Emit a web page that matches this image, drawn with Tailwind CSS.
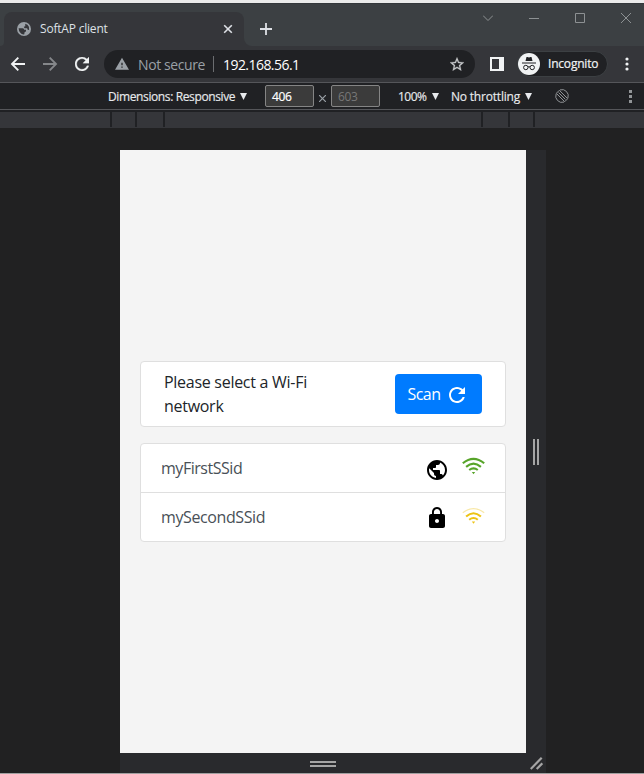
<!DOCTYPE html>
<html lang="en">
<head>
<meta charset="utf-8">
<title>SoftAP client</title>
<script src="https://cdn.jsdelivr.net/npm/@tailwindcss/browser@4"></script>
</head>
<body class="w-[644px] h-[774px] overflow-hidden bg-[#202124] font-['Segoe_UI','Open_Sans','Noto_Sans',sans-serif] whitespace-nowrap">
<div class="flex flex-col h-[774px]">
  <div class="h-[3px] bg-[#ebebeb] shrink-0"></div>
  <!-- tab strip -->
  <header class="h-[43px] shrink-0 bg-[#3c4043] border-t border-[#34383b] flex">
    <div class="w-1 flex flex-col justify-end bg-[#35363a]"><div class="h-full bg-[#3c4043] rounded-br-[4px]"></div></div>
    <div class="w-60 mt-2 bg-[#35363a] rounded-t-lg flex items-center pl-[13px] pr-[11px]">
      <svg class="size-[14px]" viewBox="0 0 14 14"><circle cx="7" cy="7" r="7" fill="#9aa0a6"/><path d="M1.600 6.200h4.200q1.400.2 1.400 1.500h1.800v1.800q-1.600.2-1.600 1.400v1.300l-1.200.2Q2 11.300 1.600 6.200zM8.200 1.700q2.700.7 3.700 3.100l.2 3.200-1.400-.2-.6-1.500H7.500l-.7-1.500 1.500-.5z" fill="#35363a"/></svg>
      <span class="ml-[9px] text-[12px] tracking-[-0.2px] text-[#dee1e6] flex-1">SoftAP client</span>
      <svg class="size-[10px]" viewBox="0 0 10 10" stroke="#dee1e6" stroke-width="1.600"><path d="M1.200 1.200l7.600 7.600M8.800 1.200L1.200 8.800"/></svg>
    </div>
    <div class="w-2 bg-[#35363a]"><div class="h-full bg-[#3c4043] rounded-bl-lg"></div></div>
    <svg class="ml-2 mt-[19px] size-3" viewBox="0 0 12 12" stroke="#dee1e6" stroke-width="1.800"><path d="M6 0v12M0 6h12"/></svg>
    <div class="flex ml-[211px] pt-[9px] gap-[36px]">
      <svg class="size-[10px]" viewBox="0 0 10 10" fill="none" stroke="#8d9193"><path d="M0 2.500l5 5 5-5"/></svg>
      <svg class="size-[10px]" viewBox="0 0 10 10" stroke="#8d9193"><path d="M0 5.500h10"/></svg>
      <svg class="size-[10px]" viewBox="0 0 10 10" fill="none" stroke="#8d9193"><path d="M.5.500h9v9h-9z"/></svg>
      <svg class="size-[10px]" viewBox="0 0 10 10" stroke="#8d9193"><path d="M0 0l10 10M10 0L0 10"/></svg>
    </div>
  </header>
  <!-- toolbar -->
  <div class="h-9 shrink-0 bg-[#35363a] flex items-center">
    <svg class="ml-[10px] size-4" viewBox="0 0 16 16" fill="none" stroke="#f1f3f4" stroke-width="1.900"><path d="M15 8H2M8.300 1.700L2 8l6.300 6.300"/></svg>
    <svg class="ml-4 size-4" viewBox="0 0 16 16" fill="none" stroke="#85878a" stroke-width="1.900"><path d="M1 8h13M7.700 1.700L14 8l-6.300 6.300"/></svg>
    <svg class="ml-[17px] mr-px size-[14px]" viewBox="4 4 16 16" fill="#f1f3f4" stroke="#f1f3f4" stroke-width=".3"><path d="M17.650 6.350C16.200 4.900 14.210 4 12 4c-4.420 0-7.990 3.580-7.990 8s3.570 8 7.990 8c3.730 0 6.840-2.550 7.730-6h-2.080c-.82 2.330-3.040 4-5.650 4-3.310 0-6-2.690-6-6s2.690-6 6-6c1.660 0 3.140.690 4.220 1.780L13 11h7V4l-2.350 2.350z"/></svg>
    <div class="ml-[14px] w-[371px] h-7 bg-[#202124] rounded-full flex items-center pl-[11px] pr-[11px] text-[14px]">
      <svg class="size-[14px]" viewBox="1 2 22 20" fill="#9aa0a6"><path d="M1 21h22L12 2 1 21zm12-3h-2v-2h2v2zm0-4h-2v-4h2v4z"/></svg>
      <span class="ml-[9px] w-[67px] tracking-[-0.4px] text-[#9aa0a6]">Not secure</span>
      <div class="ml-2 w-px h-4 bg-[#6b6d70]"></div>
      <span class="ml-[9px] tracking-[-0.55px] text-white flex-1">192.168.56.1</span>
      <svg class="size-[14px]" viewBox="2 2 20 19" fill="#c7cacc" stroke="#c7cacc" stroke-width=".4"><path d="M22 9.240l-7.190-.62L12 2 9.190 8.630 2 9.240l5.460 4.730L5.820 21 12 17.270 18.180 21l-1.630-7.030L22 9.240zM12 15.400l-3.760 2.270 1-4.280-3.320-2.880 4.380-.38L12 6.100l1.710 4.040 4.380.38-3.320 2.880 1 4.280L12 15.400z"/></svg>
    </div>
    <svg class="ml-[15px] size-[14px]" viewBox="0 0 14 14"><path d="M0 0h14v14H0zM2 2h7v10H2z" fill="#f1f3f4" fill-rule="evenodd"/></svg>
    <div class="ml-[13px] w-[91px] h-[26px] rounded-full bg-[#202124] border border-[#3c4043] flex items-center">
      <svg class="size-[22px] shrink-0" viewBox="0 0 22 22"><circle cx="11" cy="11" r="11" fill="#f1f3f4"/><path d="M7.500 8l1-4h1l1.500.500 1.500-.500h1l1 4zM4 9.500h14v1H4z" fill="#202124"/><g fill="none" stroke="#202124"><circle cx="7.800" cy="14.500" r="2.200"/><circle cx="14.200" cy="14.500" r="2.200"/><path d="M10 14q1-.6 2 0"/></g></svg>
      <span class="ml-2 text-[12px] tracking-[-0.2px] text-[#f1f3f4] [-webkit-text-stroke:0.2px_#f1f3f4]">Incognito</span>
    </div>
    <svg class="ml-[17px] w-1 h-[14px]" viewBox="0 0 4 14" fill="#f1f3f4"><circle cx="2" cy="2" r="1.600"/><circle cx="2" cy="7" r="1.600"/><circle cx="2" cy="12" r="1.600"/></svg>
  </div>
  <!-- device toolbar -->
  <div class="h-[28px] shrink-0 bg-[#202124] border-y border-[#55565a] flex items-center text-[12px] text-[#e8eaed]">
    <span class="ml-[108px] pt-px w-[128px] tracking-[-0.38px] [-webkit-text-stroke:0.15px_#e8eaed]">Dimensions: Responsive</span>
    <svg class="ml-[4px] w-[7px] h-[7px]" viewBox="0 0 7 7" fill="#e8eaed"><path d="M0 0h7L3.500 7z"/></svg>
    <div class="ml-[18px] w-[49px] h-[22px] bg-[#3b3b3b] border border-[#858585] rounded-[2px] pl-[6px] pt-px leading-5 tracking-[-0.3px] text-white [-webkit-text-stroke:0.2px_#fff]">406</div>
    <svg class="ml-[5px] mt-1 size-[7px]" viewBox="0 0 7 7" stroke="#9aa0a6" stroke-width="1.200"><path d="M0 0l7 7M7 0L0 7"/></svg>
    <div class="ml-[5px] w-[49px] h-[22px] bg-[#3b3b3b] border border-[#858585] rounded-[2px] pl-[6px] pt-px leading-5 tracking-[-0.3px] text-[#777]">603</div>
    <span class="ml-[18px] pt-px w-[29px] tracking-[-0.5px] [-webkit-text-stroke:0.15px_#e8eaed]">100%</span>
    <svg class="ml-[5px] w-[7px] h-[7px]" viewBox="0 0 7 7" fill="#e8eaed"><path d="M0 0h7L3.500 7z"/></svg>
    <span class="ml-[12px] pt-px w-[70px] tracking-[-0.2px] [-webkit-text-stroke:0.15px_#e8eaed]">No throttling</span>
    <svg class="ml-[4px] w-[7px] h-[7px]" viewBox="0 0 7 7" fill="#e8eaed"><path d="M0 0h7L3.500 7z"/></svg>
    <svg class="ml-[23px] size-[14px]" viewBox="0 0 14 14" fill="none" stroke="#909396"><path d="M5 .9A6.300 6.300 0 0 1 12.900 9M9 13.100A6.300 6.300 0 0 1 1.100 5"/><path d="M4.300 1.300l8.400 8.400-3 3L1.300 4.300zM3.600 3.600l6.800 6.800"/></svg>
    <svg class="ml-[60px] w-[3px] h-[13px]" viewBox="0 0 3 13" fill="#919497"><path d="M0 0h3v3H0zM0 5h3v3H0zM0 10h3v3H0z"/></svg>
  </div>
  <div class="h-[2px] shrink-0"></div>
  <!-- breakpoint ruler -->
  <div class="h-4 shrink-0 bg-[#35363a] flex text-[#202124]">
    <i class="ml-[110px] w-[2px] h-[15px] bg-current"></i><i class="ml-[23px] w-[2px] h-[15px] bg-current"></i><i class="ml-[26px] w-[2px] h-[15px] bg-current"></i><i class="ml-[316px] w-[2px] h-[15px] bg-current"></i><i class="ml-[25px] w-[2px] h-[15px] bg-current"></i><i class="ml-[23px] w-[2px] h-[15px] bg-current"></i>
  </div>
  <!-- emulated device -->
  <main class="h-[645px] shrink-0 pt-[22px] pl-[120px] bg-[#212122]">
    <div class="w-[426px] h-[623px] bg-[#292a2d] grid grid-cols-[406px_20px] grid-rows-[603px_20px]">
      <div class="bg-[#f4f4f4] px-5 pt-[211px] text-[16px] leading-6">
        <section class="h-[66px] bg-white border border-[#dfdfdf] rounded-[4px] flex items-center justify-between pl-[23px] pr-[23px]">
          <p class="w-[160px] text-[#212529] tracking-[-0.28px]">Please select a Wi-Fi<br>network</p>
          <button class="w-[87px] h-10 rounded-[4px] bg-[#007bff] text-white flex items-center pl-3">
            <span class="w-[34px] tracking-[-0.5px]">Scan</span>
            <svg class="ml-[8px] mt-px size-4" viewBox="4 4 16 16" fill="#fff"><path d="M17.650 6.350C16.200 4.900 14.210 4 12 4c-4.420 0-7.990 3.580-7.990 8s3.570 8 7.990 8c3.730 0 6.840-2.550 7.730-6h-2.080c-.82 2.330-3.040 4-5.650 4-3.310 0-6-2.690-6-6s2.690-6 6-6c1.660 0 3.140.690 4.220 1.780L13 11h7V4l-2.350 2.350z"/></svg>
          </button>
        </section>
        <ul class="mt-4 h-[99px] bg-white border border-[#dfdfdf] rounded-[4px] text-[#495057]">
          <li class="h-[49px] border-b border-[#dfdfdf] flex items-center pl-5">
            <span class="w-[260px] tracking-[-0.47px]">myFirstSSid</span>
            <svg class="ml-[4px] mt-[3px] size-6" viewBox="0 0 24 24"><path d="M12 2C6.480 2 2 6.480 2 12s4.480 10 10 10 10-4.480 10-10S17.520 2 12 2zm-1 17.930c-3.950-.490-7-3.850-7-7.930 0-.620.080-1.210.210-1.790L9 15v1c0 1.100.9 2 2 2v1.930zm6.900-2.540c-.26-.81-1-1.390-1.900-1.390h-1v-3c0-.55-.45-1-1-1H8v-2h2c.55 0 1-.45 1-1V7h2c1.100 0 2-.9 2-2v-.41c2.930 1.190 5 4.060 5 7.410 0 2.080-.8 3.970-2.100 5.390z"/></svg>
            <svg class="ml-[13px] mb-[4px] w-6 h-[18px]" viewBox="0 0 24 18" fill="none" stroke="#57a429" stroke-width="2.100"><path d="M.8 6.300Q11.500-2.600 22.200 6.300M4.100 9.900Q11.500 3.400 18.900 9.900M7.200 13Q11.500 9.600 15.800 13"/><path d="M9.800 15h3.400l-1.700 2.200z" fill="#57a429" stroke="none"/></svg>
          </li>
          <li class="h-[48px] flex items-center pl-5">
            <span class="w-[260px] tracking-[-0.4px]">mySecondSSid</span>
            <svg class="ml-[4px] mt-[2px] size-6" viewBox="0 0 24 24"><path d="M18 8h-1V6c0-2.760-2.240-5-5-5S7 3.240 7 6v2H6c-1.100 0-2 .9-2 2v10c0 1.100.9 2 2 2h12c1.100 0 2-.9 2-2V10c0-1.100-.9-2-2-2zm-6 9c-1.100 0-2-.9-2-2s.9-2 2-2 2 .9 2 2-.9 2-2 2zm3.100-9H8.900V6c0-1.710 1.390-3.100 3.100-3.100s3.100 1.390 3.100 3.100v2z"/></svg>
            <svg class="ml-[13px] mb-[2px] w-6 h-[18px]" viewBox="0 0 24 18" fill="none" stroke="#edc313" stroke-width="2.100"><path d="M.8 5.800Q11.500-2.600 22.200 5.800" stroke="#f8e8a8" stroke-width="1.200"/><path d="M4.100 9.500Q11.500 3 18.900 9.500M7.200 12.700Q11.500 9.300 15.800 12.700"/><path d="M9.800 14.500h3.400l-1.700 2.200z" fill="#edc313" stroke="none"/></svg>
          </li>
        </ul>
      </div>
      <div class="flex items-center justify-center gap-[2px]"><i class="w-[2px] h-[26px] bg-[#a5a5a5]"></i><i class="w-[2px] h-[26px] bg-[#a5a5a5]"></i></div>
      <div class="flex flex-col items-center justify-center gap-[2px] pt-[2px]"><i class="w-[26px] h-[2px] bg-[#a5a5a5]"></i><i class="w-[26px] h-[2px] bg-[#a5a5a5]"></i></div>
      <div class="flex items-center pl-[4px]"><svg class="size-[13px]" viewBox="0 0 13 13" stroke="#a5a5a5" stroke-width="2.200"><path d="M.7 12L11.700.800M6.700 12l5.600-5.600"/></svg></div>
    </div>
  </main>
  <div class="h-px shrink-0 bg-[#a0a0a0]"></div>
</div>
</body>
</html>
